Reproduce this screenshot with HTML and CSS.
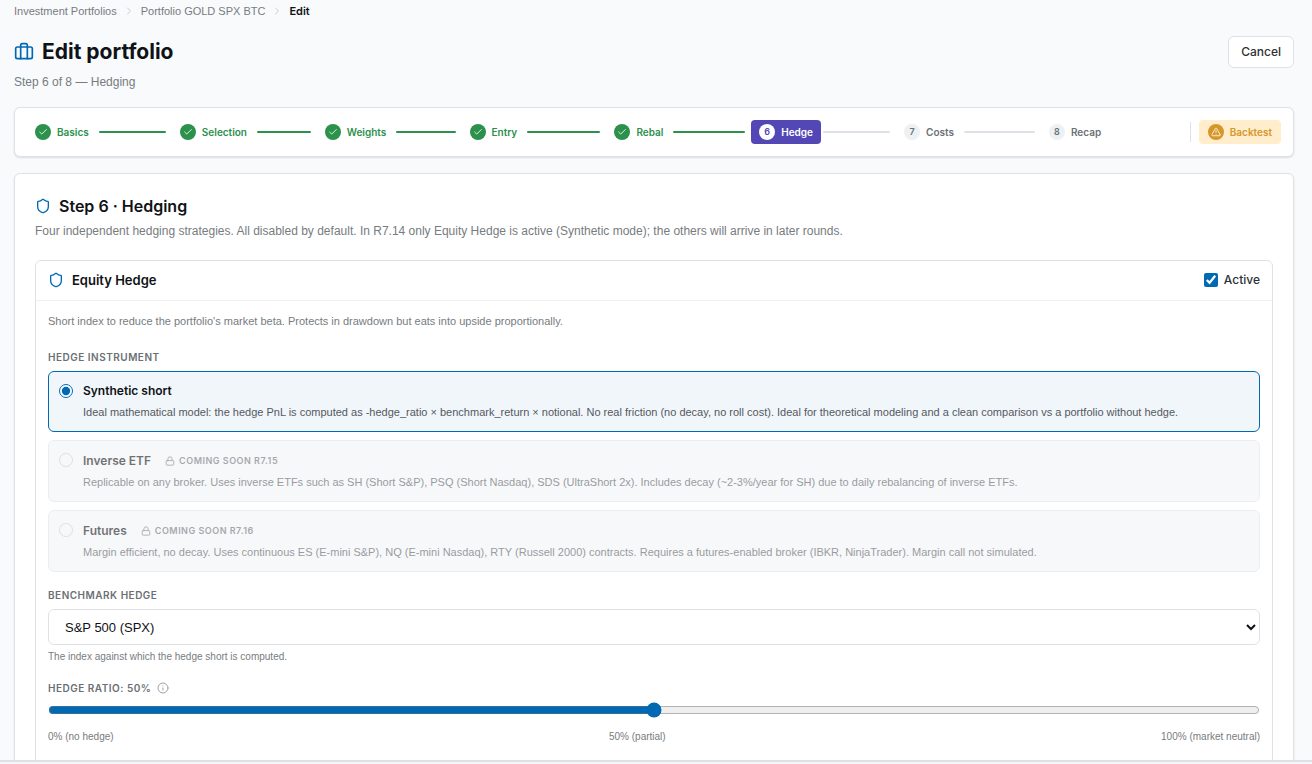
FILE: index.html
```
<!DOCTYPE html>
<html lang="en">
<head>
  <meta charset="UTF-8">
  <meta name="viewport" content="width=device-width, initial-scale=1.0">
  <title>Edit portfolio</title>
  <link rel="stylesheet" href="styles.css">
</head>
<body>
  <!-- Shared icons -->
  <svg class="sprite" aria-hidden="true">
    <symbol id="chevron" viewBox="0 0 24 24"><path d="m9 18 6-6-6-6"/></symbol>
    <symbol id="check" viewBox="0 0 24 24"><path d="M20 6 9 17l-5-5"/></symbol>
    <symbol id="shield" viewBox="0 0 24 24"><path d="M20 13c0 5-3.500 7.500-7.660 8.950a1 1 0 0 1-.67-.01C7.500 20.500 4 18 4 13V6a1 1 0 0 1 1-1c2 0 4.500-1.200 6.240-2.720a1.170 1.170 0 0 1 1.520 0C14.510 3.810 17 5 19 5a1 1 0 0 1 1 1z"/></symbol>
    <symbol id="lock" viewBox="0 0 24 24"><rect x="3" y="11" width="18" height="11" rx="2"/><path d="M7 11V7a5 5 0 0 1 10 0v4"/></symbol>
  </svg>

  <div class="app">
    <main class="page">
      <nav class="breadcrumb" aria-label="Breadcrumb">
        <a href="#">Investment Portfolios</a>
        <svg class="icon"><use href="#chevron"/></svg>
        <a href="#">Portfolio GOLD SPX BTC</a>
        <svg class="icon"><use href="#chevron"/></svg>
        <span class="current">Edit</span>
      </nav>

      <header class="page-header">
        <div>
          <h1>
            <svg class="icon" viewBox="0 0 24 24"><rect x="2" y="6" width="20" height="14" rx="2"/><path d="M8 20V4a2 2 0 0 1 2-2h4a2 2 0 0 1 2 2v16"/></svg>
            Edit portfolio
          </h1>
          <p class="subtitle">Step 6 of 8 — Hedging</p>
        </div>
        <button class="cancel" type="button">Cancel</button>
      </header>

      <!-- Wizard steps -->
      <div class="card stepper">
        <ol class="steps">
          <li class="step done"><button type="button"><span class="dot"><svg class="icon"><use href="#check"/></svg></span>Basics</button></li>
          <li class="step done"><button type="button"><span class="dot"><svg class="icon"><use href="#check"/></svg></span>Selection</button></li>
          <li class="step done"><button type="button"><span class="dot"><svg class="icon"><use href="#check"/></svg></span>Weights</button></li>
          <li class="step done"><button type="button"><span class="dot"><svg class="icon"><use href="#check"/></svg></span>Entry</button></li>
          <li class="step done"><button type="button"><span class="dot"><svg class="icon"><use href="#check"/></svg></span>Rebal</button></li>
          <li class="step active"><button type="button" aria-current="step"><span class="dot">6</span>Hedge</button></li>
          <li class="step"><button type="button"><span class="dot">7</span>Costs</button></li>
          <li class="step"><button type="button"><span class="dot">8</span>Recap</button></li>
        </ol>
        <div class="backtest-wrap">
          <button class="backtest" type="button">
            <span class="dot"><svg class="icon" viewBox="0 0 24 24"><path d="m21.730 18-8-14a2 2 0 0 0-3.480 0l-8 14A2 2 0 0 0 4 21h16a2 2 0 0 0 1.730-3"/><path d="M12 9v4M12 17h.01"/></svg></span>
            Backtest
          </button>
        </div>
      </div>

      <section class="card content">
        <h2><svg class="icon"><use href="#shield"/></svg>Step 6 · Hedging</h2>
        <p class="lead">Four independent hedging strategies. All disabled by default. In R7.14 only Equity Hedge is active (Synthetic mode); the others will arrive in later rounds.</p>

        <div class="panel">
          <div class="panel-header">
            <h3><svg class="icon"><use href="#shield"/></svg>Equity Hedge</h3>
            <label class="toggle"><input type="checkbox" checked>Active</label>
          </div>

          <div class="panel-body">
            <p class="description">Short index to reduce the portfolio's market beta. Protects in drawdown but eats into upside proportionally.</p>

            <fieldset class="options">
              <legend class="field-label">Hedge instrument</legend>
              <label class="option selected">
                <input type="radio" name="instrument" checked>
                <span class="option-text">
                  <span class="option-title">Synthetic short</span>
                  <span class="option-info">Ideal mathematical model: the hedge PnL is computed as -hedge_ratio × benchmark_return × notional. No real friction (no decay, no roll cost). Ideal for theoretical modeling and a clean comparison vs a portfolio without hedge.</span>
                </span>
              </label>
              <label class="option disabled">
                <input type="radio" name="instrument" disabled>
                <span class="option-text">
                  <span class="option-title">Inverse ETF <span class="soon"><svg class="icon"><use href="#lock"/></svg>Coming soon R7.15</span></span>
                  <span class="option-info">Replicable on any broker. Uses inverse ETFs such as SH (Short S&amp;P), PSQ (Short Nasdaq), SDS (UltraShort 2x). Includes decay (~2-3%/year for SH) due to daily rebalancing of inverse ETFs.</span>
                </span>
              </label>
              <label class="option disabled">
                <input type="radio" name="instrument" disabled>
                <span class="option-text">
                  <span class="option-title">Futures <span class="soon"><svg class="icon"><use href="#lock"/></svg>Coming soon R7.16</span></span>
                  <span class="option-info">Margin efficient, no decay. Uses continuous ES (E-mini S&amp;P), NQ (E-mini Nasdaq), RTY (Russell 2000) contracts. Requires a futures-enabled broker (IBKR, NinjaTrader). Margin call not simulated.</span>
                </span>
              </label>
            </fieldset>

            <div class="field">
              <label class="field-label" for="benchmark">Benchmark hedge</label>
              <select id="benchmark">
                <option>S&amp;P 500 (SPX)</option>
              </select>
              <p class="hint">The index against which the hedge short is computed.</p>
            </div>

            <div class="field ratio">
              <label class="field-label" for="ratio">Hedge ratio: 50%
                <svg class="icon" viewBox="0 0 24 24"><circle cx="12" cy="12" r="10"/><path d="M12 16v-4M12 8h.01"/></svg>
              </label>
              <input type="range" id="ratio" min="0" max="100" value="50">
              <div class="scale">
                <span>0% (no hedge)</span>
                <span>50% (partial)</span>
                <span>100% (market neutral)</span>
              </div>
            </div>
          </div>
        </div>
      </section>
    </main>
    <footer class="action-bar"></footer>
  </div>
</body>
</html>
```
FILE: styles.css
```
* {
  margin: 0;
  padding: 0;
  box-sizing: border-box;
}

body {
  font-family: 'Liberation Sans', Arial, sans-serif;
  font-size: 12px;
  line-height: 18px;
  background: #f9fafc;
  color: #0f1216;
}

button, select, input {
  font: inherit;
  color: inherit;
}

button {
  cursor: pointer;
}

h1, h2, h3, button, .current, .toggle, .field-label, .option-title {
  font-family: Inter, 'Liberation Sans', sans-serif;
}

.sprite {
  display: none;
}

.icon {
  width: 16px;
  height: 16px;
  flex: none;
  fill: none;
  stroke: currentColor;
  stroke-width: 2;
  stroke-linecap: round;
  stroke-linejoin: round;
}

.app {
  display: flex;
  flex-direction: column;
  height: 100vh;
}

.page {
  flex: 1;
  min-height: 0;
  overflow: hidden;
  padding: 2px 18px 0 14px;
}

/* Breadcrumb */
.breadcrumb {
  display: flex;
  align-items: center;
  gap: 6px;
  color: #777c80;
  font-size: 11px;
}

.breadcrumb a {
  color: inherit;
  text-decoration: none;
}

.breadcrumb .icon {
  width: 12px;
  height: 12px;
  color: #c9ced2;
}

.breadcrumb .current {
  color: #0f1216;
  font-weight: 600;
}

/* Title row */
.page-header {
  display: flex;
  justify-content: space-between;
  align-items: flex-start;
  margin: 16px 0;
}

h1 {
  display: flex;
  align-items: center;
  gap: 8px;
  font-size: 21px;
  line-height: 32px;
  font-weight: 700;
}

h1 .icon {
  width: 20px;
  height: 20px;
  color: #0069b4;
}

.subtitle {
  margin-top: 5px;
  color: #777c80;
}

.cancel {
  padding: 6px 12px;
  border: 1px solid #dee2e6;
  border-radius: 6px;
  background: #fff;
  color: #2d3135;
  font-weight: 500;
}

.card {
  border: 1px solid #dee2e6;
  border-radius: 6px;
  background: #fff;
  box-shadow: 0 1px 2px rgba(0, 0, 0, 0.12);
}

/* Stepper */
.stepper {
  display: flex;
  align-items: center;
  padding: 12px;
  margin-bottom: 16px;
}

.steps {
  display: flex;
  flex: 1;
  list-style: none;
}

.step {
  display: flex;
  align-items: center;
  flex: 1 1 0;
}

.step button, .backtest {
  display: flex;
  align-items: center;
  gap: 6px;
  padding: 4px 8px;
  border: none;
  border-radius: 4px;
  background: none;
  color: #6b7075;
  font-size: 10px;
  line-height: 16px;
  font-weight: 600;
}

.dot {
  display: flex;
  align-items: center;
  justify-content: center;
  width: 16px;
  height: 16px;
  border-radius: 50%;
  background: #edf1f4;
  font-size: 9px;
}

.dot .icon {
  width: 10px;
  height: 10px;
}

.step:not(:last-child)::after {
  content: '';
  flex: 1;
  height: 2px;
  margin: 0 6px 0 2px;
  border-radius: 1px;
  background: #dee2e6;
}

.step.done button {
  color: #2b914b;
}

.step.done .dot {
  background: #2b914b;
  color: #fff;
}

.step.done::after {
  background: #2b914b !important;
}

.step.active button {
  background: #5347b5;
  color: #fff;
}

.step.active .dot {
  background: #fff;
  color: #5347b5;
}

.backtest-wrap {
  display: flex;
  align-items: center;
  margin-left: 4px;
}

.backtest-wrap::before {
  content: '';
  width: 1px;
  height: 20px;
  margin-right: 8px;
  background: #dee2e6;
}

.backtest {
  padding: 4px 9px;
  background: #ffedcc;
  color: #d69728;
}

.backtest .dot {
  background: #d69728;
  color: #fff;
}

/* Step content */
.content {
  padding: 20px;
}

h2, h3 {
  display: flex;
  align-items: center;
  gap: 8px;
  font-weight: 600;
}

h2 {
  font-size: 16px;
  line-height: 24px;
}

h3 {
  font-size: 13px;
  line-height: 20px;
}

h2 .icon, h3 .icon {
  color: #0069b4;
}

.lead {
  margin: 4px 0 20px;
  color: #777c80;
}

.panel {
  border: 1px solid #dee2e6;
  border-radius: 6px;
}

.panel-header {
  display: flex;
  justify-content: space-between;
  align-items: center;
  padding: 9px 12px 10px;
  border-bottom: 1px solid #eef0f2;
}

.toggle {
  display: flex;
  align-items: center;
  gap: 6px;
  color: #2d3135;
  font-weight: 500;
}

.toggle input {
  width: 14px;
  height: 14px;
  accent-color: #0069b4;
}

.panel-body {
  padding: 11px 12px 60px;
}

.description {
  margin-bottom: 19px;
  color: #777c80;
  font-size: 11px;
}

.field-label {
  display: flex;
  align-items: center;
  gap: 6px;
  margin-bottom: 6px;
  color: #6b7075;
  font-size: 10px;
  line-height: 16px;
  font-weight: 600;
  letter-spacing: 0.5px;
  text-transform: uppercase;
}

.options {
  display: flex;
  flex-direction: column;
  gap: 8px;
  border: none;
}

.option {
  display: flex;
  gap: 10px;
  padding: 10px;
  border: 1px solid #dee2e6;
  border-radius: 6px;
}

.option input {
  flex: none;
  width: 14px;
  height: 14px;
  margin-top: 2px;
  accent-color: #0069b4;
}

.option-text {
  display: flex;
  flex-direction: column;
  gap: 3px;
}

.option-title {
  display: flex;
  align-items: center;
  gap: 8px;
  font-weight: 600;
}

.option-info {
  color: #54595e;
  font-size: 11px;
}

.option.selected {
  border-color: #0069b4;
  background: #f1f6fb;
}

.option.disabled {
  background: #f2f4f7;
  opacity: 0.6;
}

.soon {
  display: flex;
  align-items: center;
  gap: 4px;
  padding: 0 6px;
  color: #6b7075;
  font-size: 9px;
  line-height: 19px;
  letter-spacing: 0.5px;
  text-transform: uppercase;
}

.soon .icon {
  width: 10px;
  height: 10px;
}

/* Form fields */
.field {
  margin-top: 15px;
}

select {
  display: block;
  width: 100%;
  height: 36px;
  padding: 0 0 0 12px;
  border: 1px solid #dee2e6;
  border-radius: 6px;
  background: #fff;
  font-size: 13px;
}

.hint {
  margin-top: 4px;
  color: #777c80;
  font-size: 10px;
  line-height: 16px;
}

.ratio .icon {
  width: 12px;
  height: 12px;
  color: #9da2a6;
}

input[type="range"] {
  display: block;
  width: 100%;
  height: 16px;
  accent-color: #0069b4;
}

.scale {
  display: flex;
  justify-content: space-between;
  margin-top: 11px;
  color: #777c80;
  font-size: 10px;
  line-height: 16px;
}

.action-bar {
  height: 4px;
  border-top: 2px solid #dee2e6;
  background: #f4f6f8;
}
```
